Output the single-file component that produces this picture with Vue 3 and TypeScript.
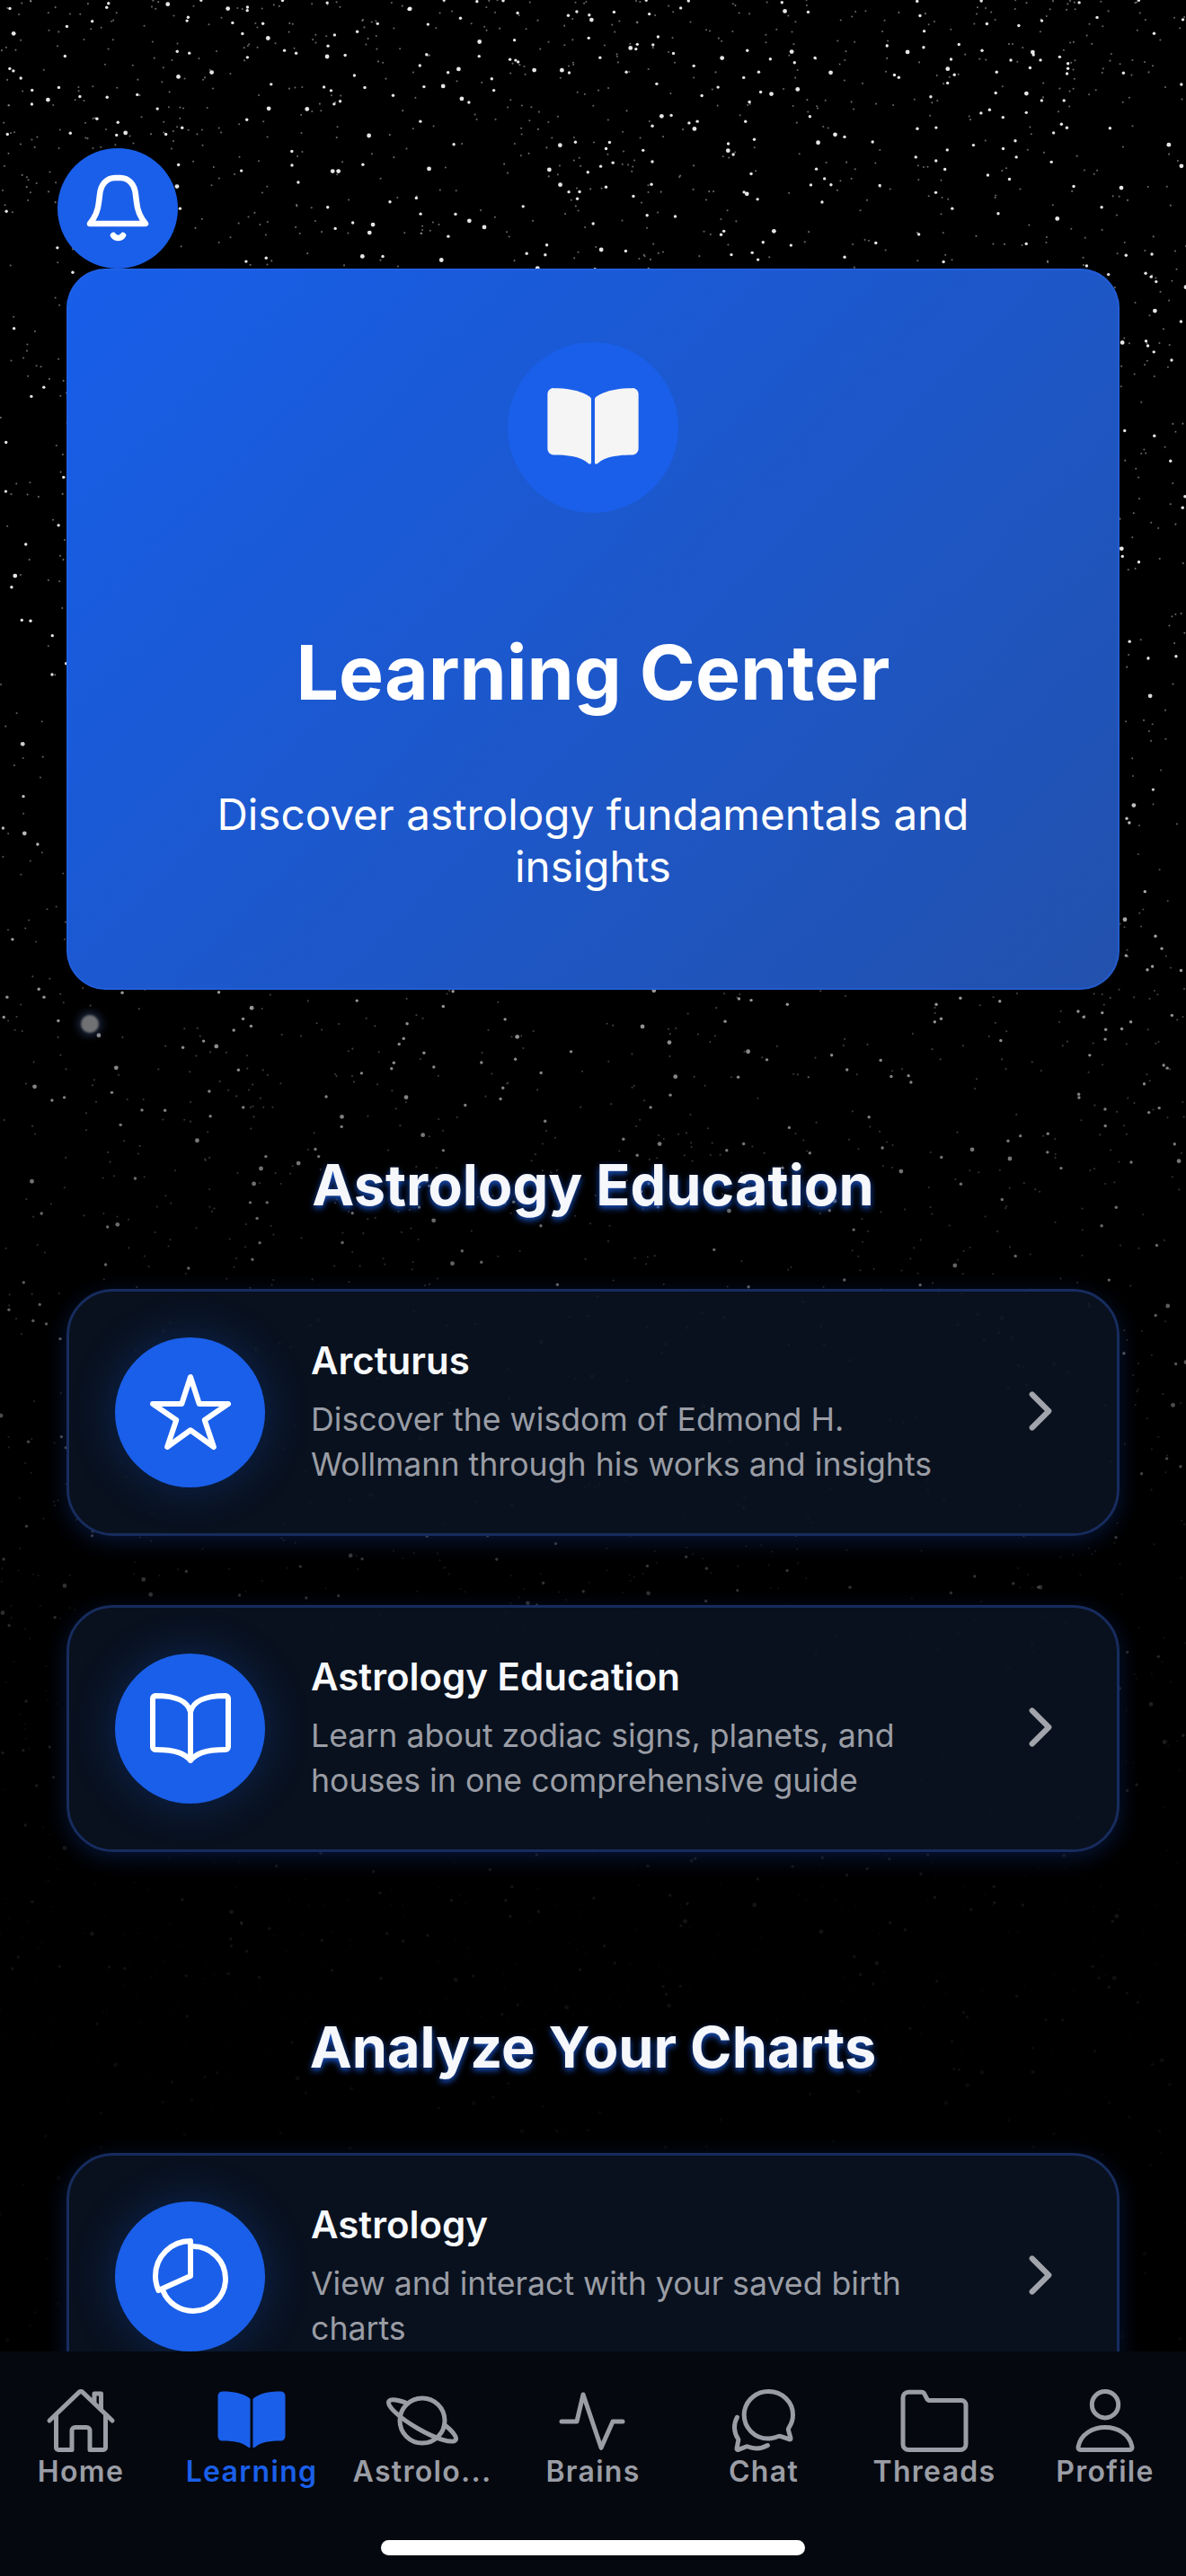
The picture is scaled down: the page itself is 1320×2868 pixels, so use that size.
<script setup lang="ts">
import { computed } from 'vue'

interface Star {
  x: number
  y: number
  r: number
  o: number
}

interface Item {
  title: string
  desc: string
  icon: string
}

const education: Item[] = [
  {
    title: 'Arcturus',
    desc: 'Discover the wisdom of Edmond H. Wollmann through his works and insights',
    icon: 'star',
  },
  {
    title: 'Astrology Education',
    desc: 'Learn about zodiac signs, planets, and houses in one comprehensive guide',
    icon: 'book',
  },
]

const charts: Item[] = [
  {
    title: 'Astrology',
    desc: 'View and interact with your saved birth charts',
    icon: 'pie',
  },
]

const tabs = [
  { label: 'Home', icon: 'home' },
  { label: 'Learning', icon: 'bookFill' },
  { label: 'Astrolo...', icon: 'planet' },
  { label: 'Brains', icon: 'pulse' },
  { label: 'Chat', icon: 'chat' },
  { label: 'Threads', icon: 'folder' },
  { label: 'Profile', icon: 'person' },
]

/* Stars get dimmer further down the page, gone by the second section. */
function fade(y: number) {
  if (y < 700) return 0.9
  if (y < 1300) return 0.9 - ((y - 700) / 600) * 0.45
  if (y < 1900) return 0.45 - ((y - 1300) / 600) * 0.33
  return Math.max(0.03, 0.12 - ((y - 1900) / 500) * 0.09)
}

const stars = computed<Star[]>(() => {
  let seed = 48271
  const rand = () => {
    seed = (seed * 16807) % 2147483647
    return seed / 2147483647
  }
  const list: Star[] = []
  for (let i = 0; i < 5200; i++) {
    const y = Math.pow(rand(), 1.25) * 2620
    const size = rand()
    list.push({
      x: rand() * 1320,
      y,
      r: size > 0.95 ? 2.4 : size > 0.7 ? 1.7 : 1.05,
      o: fade(y) * (size > 0.7 ? 1 : 0.45),
    })
  }
  return list
})
</script>

<template>
  <div class="screen">
    <svg class="sky" width="1320" height="2620" viewBox="0 0 1320 2620" aria-hidden="true">
      <circle
        v-for="(s, i) in stars"
        :key="i"
        :cx="s.x"
        :cy="s.y"
        :r="s.r"
        :opacity="s.o"
        fill="#fff"
      />
    </svg>
    <div class="big-star"></div>

    <main class="content">
      <button class="bell" type="button" aria-label="Notifications">
        <svg width="82" height="82" viewBox="0 0 82 82" fill="none" stroke="#fff" stroke-width="6.5" stroke-linecap="round" stroke-linejoin="round">
          <path d="M10 58c5-6 9-13 10-24l1-8C22 14 29 7 38 7h6c9 0 16 7 17 19l1 8c1 11 5 18 10 24z" />
          <path d="M36 71c3 4 8 4 11 0" />
        </svg>
      </button>

      <section class="hero">
        <div class="hero-icon">
          <svg width="108" height="108" viewBox="0 0 512 512" fill="#f5f5f5">
            <path d="M202.24 74C166.11 56.75 115.61 48.3 48 48a31.36 31.36 0 00-17.92 5.33A32 32 0 0016 79.9V366c0 19.34 13.76 33.93 32 34 71.07 0 142.37 6.64 185.11 47.04a8 8 0 0013.5-5.8V107.2a15.94 15.94 0 00-5.49-12A143 143 0 00202.24 74z" />
            <path transform="matrix(-1 0 0 1 512 0)" d="M202.24 74C166.11 56.75 115.61 48.3 48 48a31.36 31.36 0 00-17.92 5.33A32 32 0 0016 79.9V366c0 19.34 13.76 33.93 32 34 71.07 0 142.37 6.64 185.11 47.04a8 8 0 0013.5-5.8V107.2a15.94 15.94 0 00-5.49-12A143 143 0 00202.24 74z" />
          </svg>
        </div>
        <h1 class="hero-title">Learning Center</h1>
        <p class="hero-sub">Discover astrology fundamentals and insights</p>
      </section>

      <h2 class="section-title first">Astrology Education</h2>
      <div class="cards">
        <article v-for="item in education" :key="item.title" class="card">
          <div class="card-icon">
            <svg width="96" height="96" viewBox="0 0 512 512" fill="none" stroke="#fff" stroke-width="32" stroke-linecap="round" stroke-linejoin="round">
              <path v-if="item.icon === 'star'" d="M480 208H308L256 48l-52 160H32l140 96-54 160 138-100 138 100-54-160z" />
              <path v-else d="M256 160c16-63.16 76.43-95.41 208-96a15.94 15.94 0 0116 16v288a16 16 0 01-16 16c-128 0-177.45 25.81-208 64-30.37-38-80-64-208-64-9.88 0-16-8.05-16-17.93V80a15.94 15.94 0 0116-16c131.57.59 192 32.84 208 96zM256 160v288" />
            </svg>
          </div>
          <div class="card-text">
            <h3>{{ item.title }}</h3>
            <p>{{ item.desc }}</p>
          </div>
          <svg class="chevron" width="66" height="66" viewBox="0 0 512 512" fill="none" stroke="#a1a4ab" stroke-width="48" stroke-linecap="round" stroke-linejoin="round">
            <path d="M184 112l144 144-144 144" />
          </svg>
        </article>
      </div>

      <h2 class="section-title second">Analyze Your Charts</h2>
      <div class="cards">
        <article v-for="item in charts" :key="item.title" class="card">
          <div class="card-icon">
            <svg width="96" height="96" viewBox="0 0 512 512" fill="none" stroke="#fff" stroke-width="32" stroke-linecap="round" stroke-miterlimit="10">
              <path d="M256.05 80.65Q263.94 80 272 80c106 0 192 86 192 192S378 464 272 464A192.09 192.09 0 0192.35 342.05" />
              <path d="M256 48C141.12 48 48 141.12 48 256a207.29 207.29 0 0018.09 85L256 256z" stroke-linejoin="round" />
            </svg>
          </div>
          <div class="card-text">
            <h3>{{ item.title }}</h3>
            <p>{{ item.desc }}</p>
          </div>
          <svg class="chevron" width="66" height="66" viewBox="0 0 512 512" fill="none" stroke="#a1a4ab" stroke-width="48" stroke-linecap="round" stroke-linejoin="round">
            <path d="M184 112l144 144-144 144" />
          </svg>
        </article>
      </div>
    </main>

    <nav class="tabbar">
      <div class="tabs">
        <div v-for="(tab, i) in tabs" :key="tab.label" class="tab" :class="{ active: i === 1 }">
          <svg width="80" height="80" viewBox="0 0 512 512" fill="none" stroke="currentColor" stroke-width="32" stroke-linecap="round" stroke-linejoin="round">
            <template v-if="tab.icon === 'home'">
              <path d="M80 212v236a16 16 0 0016 16h96V328a24 24 0 0124-24h80a24 24 0 0124 24v136h96a16 16 0 0016-16V212" />
              <path d="M480 256L266.89 52c-5-5.28-16.69-5.34-21.78 0L32 256M400 179V64h-48v69" />
            </template>
            <g v-else-if="tab.icon === 'bookFill'" fill="currentColor" stroke="none">
              <path d="M202.24 74C166.11 56.75 115.61 48.3 48 48a31.36 31.36 0 00-17.92 5.33A32 32 0 0016 79.9V366c0 19.34 13.76 33.93 32 34 71.07 0 142.37 6.64 185.11 47.04a8 8 0 0013.5-5.8V107.2a15.94 15.94 0 00-5.49-12A143 143 0 00202.24 74z" />
              <path transform="matrix(-1 0 0 1 512 0)" d="M202.24 74C166.11 56.75 115.61 48.3 48 48a31.36 31.36 0 00-17.92 5.33A32 32 0 0016 79.9V366c0 19.34 13.76 33.93 32 34 71.07 0 142.37 6.64 185.11 47.04a8 8 0 0013.5-5.8V107.2a15.94 15.94 0 00-5.49-12A143 143 0 00202.24 74z" />
            </g>
            <template v-else-if="tab.icon === 'planet'">
              <path d="M413.48 284.46c58.87 47.24 91.61 89 80.31 108.55-17.85 30.85-138.78-5.48-270.1-81.15S.37 149.84 18.21 119c11.16-19.28 62.58-12.32 131.64 14.09" />
              <circle cx="256" cy="256" r="160" />
            </template>
            <path v-else-if="tab.icon === 'pulse'" d="M32 262h109l45-192 128 380 83-188h70" />
            <template v-else-if="tab.icon === 'chat'">
              <path d="M431 320.6c-1-3.6 1.2-8.6 3.3-12.2a33.68 33.68 0 012.1-3.1A162 162 0 00464 215c.3-92.2-77.5-167-173.7-167-83.9 0-153.9 57.1-170.3 132.9a160.7 160.7 0 00-3.7 34.2c0 92.3 74.8 169.1 171 169.1 15.3 0 35.9-4.6 47.2-7.7s22.5-7.2 25.4-8.3a26.44 26.44 0 019.3-1.7 26 26 0 0110.1 2l56.7 20.1a13.52 13.52 0 003.9 1 8 8 0 008-8 12.85 12.85 0 00-.5-2.7z" />
              <path d="M66.46 232a146.23 146.23 0 006.39 152.67c2.31 3.49 3.61 6.19 3.21 8s-11.93 61.87-11.93 61.87a8 8 0 002.71 7.68A8.17 8.17 0 0072 464a7.26 7.26 0 002.91-.6l56.21-22a15.7 15.7 0 0112 .2c18.94 7.38 39.88 12 60.83 12A159.21 159.21 0 00284 432.11" />
            </template>
            <path v-else-if="tab.icon === 'folder'" d="M72 464h368a40 40 0 0040-40V144a32 32 0 00-32-32H216a12 12 0 01-10-6l-20-38a24 24 0 00-20-16H72a40 40 0 00-40 40v332a40 40 0 0040 40z" />
            <template v-else>
              <circle cx="256" cy="142" r="94" />
              <path d="M256 304c-87 0-175.3 48-191.64 138.6C62.39 453.52 68.57 464 80 464h352c11.44 0 17.62-10.48 15.65-21.4C431.3 352 343 304 256 304z" />
            </template>
          </svg>
          <span class="tab-label">{{ tab.label }}</span>
        </div>
      </div>
      <div class="home-indicator"></div>
    </nav>
  </div>
</template>

<style scoped>
.screen {
  position: relative;
  display: flex;
  flex-direction: column;
  width: 1320px;
  height: 2868px;
  overflow: hidden;
  background: #000;
  font-family: Inter, 'Liberation Sans', sans-serif;
  color: #fff;
}

.sky {
  position: absolute;
  top: 0;
  left: 0;
  filter: blur(0.7px);
}

.big-star {
  position: absolute;
  top: 1130px;
  left: 90px;
  width: 20px;
  height: 20px;
  border-radius: 50%;
  background: #6f7173;
  box-shadow: 0 0 10px 3px rgba(70, 100, 170, 0.4);
  filter: blur(1px);
}

.content {
  position: relative;
  flex: 1;
  min-height: 0;
  overflow: hidden;
  padding: 165px 74px 0;
}

.bell {
  display: flex;
  align-items: center;
  justify-content: center;
  width: 134px;
  height: 134px;
  margin-left: -10px;
  padding: 0;
  border: none;
  border-radius: 50%;
  background: #1a5fe9;
}

.hero {
  display: flex;
  flex-direction: column;
  align-items: center;
  height: 803px;
  padding: 82px 120px 0;
  box-sizing: border-box;
  border-radius: 44px;
  background: linear-gradient(135deg, #175ee9 0%, #2251ad 100%);
  box-shadow: inset 0 0 0 2px rgba(40, 100, 230, 0.5);
}

.hero-icon {
  display: flex;
  flex: none;
  align-items: center;
  justify-content: center;
  width: 190px;
  height: 190px;
  border-radius: 50%;
  background: #1a5fe9;
}

.hero-title {
  margin: 128px 0 0;
  font-size: 84px;
  line-height: 100px;
  font-weight: 700;
  white-space: nowrap;
  text-align: center;
}

.hero-sub {
  margin: 79px 0 0;
  font-size: 47.6px;
  line-height: 58px;
  font-weight: 400;
  text-align: center;
}

.section-title {
  margin: 0;
  font-size: 63px;
  line-height: 76px;
  font-weight: 700;
  text-align: center;
  color: #f5f7fb;
  text-shadow: 0 3px 7px #1a55cc;
}

.section-title.first {
  margin-top: 179px;
  margin-bottom: 78px;
}

.section-title.second {
  margin-top: 179px;
  margin-bottom: 80px;
}

.cards {
  display: flex;
  flex-direction: column;
  gap: 77px;
}

.card {
  display: flex;
  align-items: center;
  height: 275px;
  box-sizing: border-box;
  padding: 0 52px 0 51px;
  border: 3px solid #172c5e;
  border-radius: 52px;
  background: rgba(10, 18, 33, 0.92);
  box-shadow: 0 6px 24px rgba(26, 80, 200, 0.28);
}

.card-icon {
  display: flex;
  flex: none;
  align-items: center;
  justify-content: center;
  width: 167px;
  height: 167px;
  margin-top: -1px;
  border-radius: 50%;
  background: #1a5fe9;
  box-shadow: 0 0 50px rgba(26, 95, 233, 0.28);
}

.card-text {
  flex: 1;
  min-width: 0;
  margin-left: 51px;
  padding-right: 50px;
}

.card-text h3 {
  margin: -1px 0 14px;
  font-size: 42px;
  line-height: 52px;
  font-weight: 600;
  color: #f8fafd;
}

.card-text p {
  margin: 0;
  font-size: 35.7px;
  line-height: 50.5px;
  font-weight: 400;
  color: #9a9da5;
}

.chevron {
  flex: none;
  margin-top: -3px;
}

.tabbar {
  position: relative;
  flex: none;
  height: 250px;
  box-sizing: border-box;
  padding-top: 37px;
  background: #05080f;
}

.tabs {
  display: grid;
  grid-template-columns: repeat(7, 1fr);
  margin: 0 -5px;
}

.tab {
  display: flex;
  flex-direction: column;
  align-items: center;
  color: #9a9da5;
}

.tab.active {
  color: #1a5fe9;
}

.tab-label {
  margin-top: -3px;
  font-size: 32px;
  line-height: 40px;
  font-weight: 600;
  letter-spacing: 1.3px;
  white-space: nowrap;
}

.home-indicator {
  position: absolute;
  left: 424px;
  bottom: 23px;
  width: 472px;
  height: 17px;
  border-radius: 9px;
  background: #fff;
}
</style>
